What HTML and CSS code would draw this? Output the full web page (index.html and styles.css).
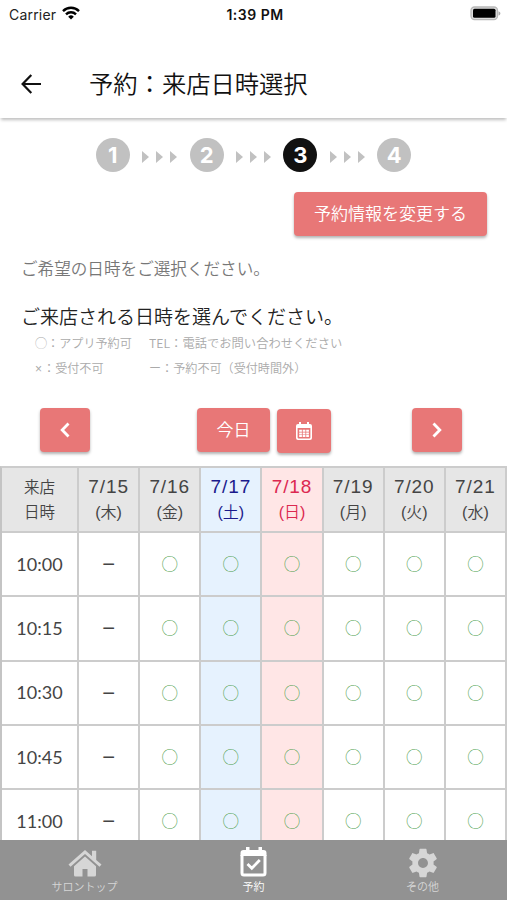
FILE: index.html
```html
<!DOCTYPE html>
<html lang="ja">
<head>
    <meta charset="UTF-8">
    <meta name="viewport" content="width=device-width, initial-scale=1.0">
    <title>予約：来店日時選択</title>
    <link rel="stylesheet" href="styles.css">
</head>
<body>
    <div class="status-bar">
        <div class="carrier">
            <span>Carrier</span>
            <svg width="18" height="14" viewBox="0 0 18 14" fill="none" stroke="#000" stroke-width="2.4">
                <path d="M1 5.1a11.3 11.3 0 0 1 16 0"/>
                <path d="M4 8.3a7 7 0 0 1 10 0"/>
                <path d="M9 13.6L6.2 10.7a4 4 0 0 1 5.6 0z" fill="#000" stroke="none"/>
            </svg>
        </div>
        <span class="clock">1:39 PM</span>
        <svg class="battery" width="31" height="15" viewBox="0 0 31 15">
            <rect x="1" y="1" width="26.5" height="12.6" rx="3.5" fill="#ddd" stroke="#b8b8b8" stroke-width="1.3"/>
            <rect x="3" y="2.8" width="22.5" height="9" rx="1.5" fill="#000"/>
            <path d="M28.5 5.2c2.5.8 2.5 3.6 0 4.4z" fill="#aaa"/>
        </svg>
    </div>

    <header class="header">
        <svg class="back" width="20" height="20" viewBox="0 0 20 20" fill="none" stroke="#111" stroke-width="2.2">
            <path d="M10.3 1L1.6 10l8.7 9M1.8 10H20"/>
        </svg>
        <h1>予約：来店日時選択</h1>
    </header>

    <main class="content">
        <div class="steps">
            <span class="step">1</span>
            <div class="arrows"><i></i><i></i><i></i></div>
            <span class="step">2</span>
            <div class="arrows"><i></i><i></i><i></i></div>
            <span class="step active">3</span>
            <div class="arrows"><i></i><i></i><i></i></div>
            <span class="step">4</span>
        </div>

        <button class="btn btn-change">予約情報を変更する</button>

        <p class="lead">ご希望の日時をご選択ください。</p>
        <h2>ご来店される日時を選んでください。</h2>
        <div class="legend">
            <span>◯：アプリ予約可</span>
            <span class="tel">TEL：電話でお問い合わせください</span>
            <span><span class="cross">×</span>：受付不可</span>
            <span>ー：予約不可（受付時間外）</span>
        </div>

        <div class="week-nav">
            <button class="btn btn-arrow">
                <svg width="10" height="16" viewBox="0 0 10 16" fill="none" stroke="#fff" stroke-width="2.8"><path d="M8.5 1.5L2.2 8l6.3 6.5"/></svg>
            </button>
            <div class="week-center">
                <button class="btn btn-today">今日</button>
                <button class="btn btn-calendar">
                    <svg width="16" height="18" viewBox="0 0 16 18">
                        <path fill="#fff" fill-rule="evenodd" d="M3 0h2v2h6V0h2v2h1a2 2 0 0 1 2 2v12a2 2 0 0 1-2 2H2a2 2 0 0 1-2-2V4a2 2 0 0 1 2-2h1zM1.6 6v9.6q0 .8.8.8h11.2q.8 0 .8-.8V6z"/>
                        <path fill="#fff" d="M3.2 7.7h2.7v2H3.2zM6.7 7.7h2.7v2H6.7zM10.2 7.7h2.7v2h-2.7zM3.2 10.4h2.7v2H3.2zM6.7 10.4h2.7v2H6.7zM10.2 10.4h2.7v2h-2.7zM3.2 13.1h2.7v2H3.2zM6.7 13.1h2.7v2H6.7zM10.2 13.1h2.7v2h-2.7z"/>
                    </svg>
                </button>
            </div>
            <button class="btn btn-arrow">
                <svg width="10" height="16" viewBox="0 0 10 16" fill="none" stroke="#fff" stroke-width="2.8"><path d="M1.5 1.5L7.8 8l-6.3 6.5"/></svg>
            </button>
        </div>

        <div class="schedule" id="schedule">
            <div class="cell head corner">来店<br>日時</div>
            <div class="cell head">7/15<span>(木)</span></div>
            <div class="cell head">7/16<span>(金)</span></div>
            <div class="cell head sat">7/17<span>(土)</span></div>
            <div class="cell head sun">7/18<span>(日)</span></div>
            <div class="cell head">7/19<span>(月)</span></div>
            <div class="cell head">7/20<span>(火)</span></div>
            <div class="cell head">7/21<span>(水)</span></div>
        </div>
    </main>

    <nav class="tab-bar">
        <a class="tab">
            <svg width="34" height="28" viewBox="0 0 34 28" fill="currentColor">
                <path d="M17 1l7 6.2V1.8h4.2v9.1L33.5 15.6l-2 2.2L17 5 2.5 17.8l-2-2.2z"/>
                <path d="M17 7.5l11 9.7V26q0 1.5-1.5 1.5h-7V20h-5v7.5h-7Q6 27.5 6 26v-8.8z"/>
            </svg>
            <span>サロントップ</span>
        </a>
        <a class="tab selected">
            <svg width="27" height="30" viewBox="0 0 27 30" fill="none" stroke="currentColor">
                <path d="M2 8V26q0 2 2 2h19q2 0 2-2V8" stroke-width="3"/>
                <path d="M.5 9V6q0-3 3-3H6V0h3.5v3h9V0H22v3h1.5q3 0 3 3v3z" fill="currentColor" stroke="none"/>
                <path d="M7.5 17l4.3 4.3 8-8.3" stroke-width="2.8"/>
            </svg>
            <span>予約</span>
        </a>
        <a class="tab gear">
            <svg width="34" height="34" viewBox="0 0 24 24" fill="currentColor">
                <path d="M19.43 12.98c.04-.32.07-.64.07-.98s-.03-.66-.07-.98l2.11-1.65c.19-.15.24-.42.12-.64l-2-3.46c-.12-.22-.39-.3-.61-.22l-2.49 1c-.52-.4-1.08-.73-1.69-.98l-.38-2.65C14.46 2.18 14.25 2 14 2h-4c-.25 0-.46.18-.49.42l-.38 2.65c-.61.25-1.17.59-1.69.98l-2.49-1c-.23-.09-.49 0-.61.22l-2 3.46c-.13.22-.07.49.12.64l2.11 1.65c-.04.32-.07.65-.07.98s.03.66.07.98l-2.11 1.65c-.19.15-.24.42-.12.64l2 3.46c.12.22.39.3.61.22l2.49-1c.52.4 1.08.73 1.69.98l.38 2.65c.03.24.24.42.49.42h4c.25 0 .46-.18.49-.42l.38-2.65c.61-.25 1.17-.59 1.69-.98l2.49 1c.23.09.49 0 .61-.22l2-3.46c.12-.22.07-.49-.12-.64zM12 15.5c-1.93 0-3.5-1.57-3.5-3.5s1.57-3.5 3.5-3.5 3.5 1.57 3.5 3.5-1.57 3.5-3.5 3.5z"/>
            </svg>
            <span>その他</span>
        </a>
    </nav>

    <script>
        const times = ['10:00', '10:15', '10:30', '10:45', '11:00'];
        const columns = ['closed', 'open', 'open sat', 'open sun', 'open', 'open', 'open'];
        const schedule = document.getElementById('schedule');

        function addCell(className, text) {
            const cell = document.createElement('div');
            cell.className = 'cell ' + className;
            cell.textContent = text;
            schedule.appendChild(cell);
        }

        times.forEach((time) => {
            addCell('time', time);
            columns.forEach((col) => addCell(col, col === 'closed' ? '–' : '◯'));
        });
    </script>
</body>
</html>
```
FILE: styles.css
```css
* {
    box-sizing: border-box;
}
body {
    margin: 0;
    height: 900px;
    display: flex;
    flex-direction: column;
    overflow: hidden;
    background: #fff;
    color: #444;
    font-family: "Noto Sans CJK JP", sans-serif;
    font-weight: 350;
}
h1, h2, p {
    margin: 0;
    font-weight: 350;
}
svg {
    display: block;
}
.status-bar {
    display: grid;
    grid-template-columns: 1fr auto 1fr;
    align-items: center;
    flex: none;
    height: 28px;
    padding: 0 6px 0 9px;
    font-family: Inter, sans-serif;
    font-size: 14px;
    color: #222;
}
.carrier {
    display: flex;
    align-items: center;
    gap: 6px;
    font-weight: 400;
    letter-spacing: 0.2px;
}
.carrier svg {
    margin-top: -2px;
}
.clock {
    font-weight: 600;
    font-size: 14px;
    letter-spacing: 0.5px;
    color: #111;
}
.battery {
    justify-self: end;
    margin-top: -1px;
}
.header {
    display: flex;
    align-items: center;
    flex: none;
    height: 90px;
    padding: 21px 0 0 21px;
    box-shadow: 0 3px 3px -1px rgba(0, 0, 0, 0.25);
}
.header h1 {
    margin: -2px 0 0 48px;
    font-size: 24.3px;
    line-height: 36px;
    color: #111;
}
.content {
    flex: 1;
    min-height: 0;
    overflow: hidden;
    display: flex;
    flex-direction: column;
    padding-top: 20px;
}
.steps {
    display: flex;
    justify-content: center;
    align-items: center;
    flex: none;
    height: 34px;
}
.step {
    width: 34px;
    height: 34px;
    border-radius: 50%;
    background: #c1c1c1;
    color: #fff;
    font: 700 22px/34px Inter, sans-serif;
    text-align: center;
}
.step.active {
    background: #111;
}
.arrows {
    display: flex;
    justify-content: center;
    gap: 7px;
    width: 59.8px;
    padding-top: 4px;
}
.arrows i {
    border: 6px solid transparent;
    border-left: 7px solid #c1c1c1;
    border-right: 0;
}
.btn {
    display: flex;
    justify-content: center;
    align-items: center;
    height: 44px;
    padding: 0;
    border: none;
    border-radius: 4px;
    background: #e87777;
    color: #fff;
    font-family: inherit;
    font-weight: 350;
    font-size: 17px;
    box-shadow: 0 2px 3px rgba(0, 0, 0, 0.3);
}
.btn-change {
    align-self: flex-end;
    flex: none;
    width: 193px;
    margin: 20px 20px 0 0;
    padding-bottom: 3px;
}
.lead {
    margin: 20px 0 0 21px;
    font-size: 16.6px;
    line-height: 24px;
    color: #777;
}
h2 {
    margin: 21px 0 0 21px;
    font-size: 19px;
    line-height: 30px;
    color: #222;
}
.legend {
    display: grid;
    grid-template-columns: 114px 1fr;
    grid-auto-rows: 25px;
    flex: none;
    padding-left: 35px;
    font-size: 12.1px;
    line-height: 24px;
    color: #aaa;
}
.tel {
    font-size: 12.3px;
}
.cross {
    font-family: "Liberation Sans", sans-serif;
    margin-right: 1px;
}
.week-nav {
    display: flex;
    justify-content: space-between;
    flex: none;
    margin-top: 27px;
    padding: 0 45px 0 40px;
    height: 58px;
}
.week-center {
    display: flex;
    gap: 7px;
    margin-left: 26px;
}
.btn-arrow {
    width: 50px;
}
.btn-today {
    width: 73px;
    padding-bottom: 3px;
}
.btn-calendar {
    width: 54px;
    margin-top: 1px;
}
.schedule {
    display: grid;
    grid-template-columns: 77px repeat(7, 1fr);
    grid-template-rows: 65px;
    grid-auto-rows: 64.3px;
    flex: none;
    border-top: 2px solid #ccc;
    border-left: 2px solid #c4c4c4;
}
.cell {
    display: flex;
    flex-direction: column;
    align-items: center;
    justify-content: center;
    border-right: 2px solid #ccc;
    border-bottom: 2px solid #ccc;
}
.head {
    background: #e6e6e6;
    font-family: "Liberation Sans", "Noto Sans CJK JP", sans-serif;
    font-size: 19px;
    line-height: 26px;
    letter-spacing: 0.9px;
}
.head span {
    font-size: 16px;
    letter-spacing: 0;
}
.corner {
    font-size: 15.5px;
    line-height: 25px;
    letter-spacing: 0;
}
.sat {
    background: #e6f2fe;
}
.sun {
    background: #ffe6e6;
}
.head.sat {
    color: #1a1a8c;
}
.head.sun {
    color: #dc2850;
}
.time {
    padding-bottom: 1px;
    font-family: Lato, sans-serif;
    font-weight: 400;
    font-size: 18px;
}
.open {
    padding-bottom: 2px;
    font-size: 16px;
    font-weight: 500;
    color: #4a9e4a;
}
.closed {
    padding-bottom: 7px;
    font-size: 24px;
    font-weight: 400;
}
.tab-bar {
    display: grid;
    grid-template-columns: repeat(3, 1fr);
    flex: none;
    height: 60px;
    background: #929292;
}
.tab {
    display: flex;
    flex-direction: column;
    align-items: center;
    justify-content: flex-end;
    padding-bottom: 5px;
    color: #d6d6d6;
    font-size: 11px;
    line-height: 18px;
}
.gear svg {
    margin-bottom: -3px;
}
.tab.selected {
    color: #fff;
}
```
